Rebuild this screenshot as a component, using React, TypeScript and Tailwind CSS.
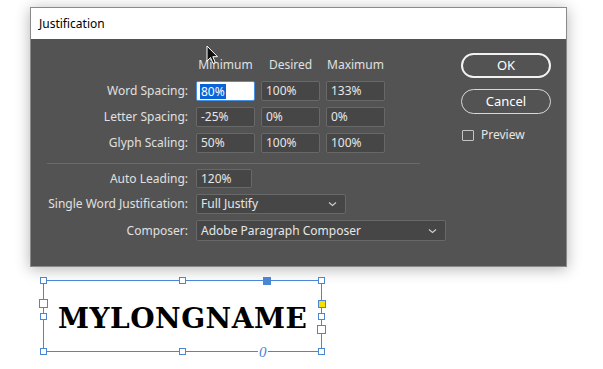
import React from "react";

const font = { fontFamily: '"Noto Sans", "Open Sans", sans-serif' };

const Field = ({ value, w = "w-[59px]", h = "h-[20px]", focused = false }: { value: string; w?: string; h?: string; focused?: boolean }) =>
  focused ? (
    <div className={`${w} ${h} rounded-[2px] border border-[#4a90e2] bg-white flex items-center pl-[3px]`}>
      <span className="bg-[#0a64d6] text-white leading-[15px] px-[1px]">{value}</span>
    </div>
  ) : (
    <div className={`${w} ${h} rounded-[2px] border border-[#686868] bg-[#464646] flex items-center pl-[4px] text-[#e6e6e6]`}>
      {value}
    </div>
  );

const Select = ({ value, w, h }: { value: string; w: string; h: string }) => (
  <div className={`${w} ${h} rounded-[2px] border border-[#686868] bg-[#464646] flex items-center justify-between pl-[4px] pr-[8px] text-[#e6e6e6]`}>
    <span>{value}</span>
    <svg width="9" height="6" viewBox="0 0 9 6">
      <path d="M1 1.5 L4.5 4.5 L8 1.5" fill="none" stroke="#d0d0d0" strokeWidth="1.1" />
    </svg>
  </div>
);

const Row = ({ label, children }: { label: string; children: React.ReactNode }) => (
  <div className="flex items-center">
    <div className="w-[157px] text-right text-[#e0e0e0]">{label}</div>
    <div className="ml-[8px] flex gap-[6px]">{children}</div>
  </div>
);

const Handle = ({ className }: { className: string }) => (
  <div className={`absolute bg-white border border-[#4a86d4] ${className}`} />
);

export default function App() {
  return (
    <div className="w-[603px] h-[369px] bg-white overflow-hidden relative text-[12px]" style={font}>
      {/* dialog */}
      <div className="ml-[30px] mt-[7px] w-[537px] h-[260px] border border-[#8a8a8a] flex flex-col shadow-[0_2px_14px_rgba(0,0,0,0.3)]">
        <div className="h-[31px] bg-white flex items-center pl-[8px] text-black">Justification</div>
        <div className="flex-1 bg-[#535353] flex">
          <div className="w-[420px] flex flex-col">
            <div className="mt-[19px] h-[14px] leading-[14px] flex ml-[165px] gap-[6px] text-[#e0e0e0]">
              <div className="w-[59px] text-center">Minimum</div>
              <div className="w-[59px] text-center">Desired</div>
              <div className="w-[59px] text-center">Maximum</div>
            </div>
            <div className="mt-[9px] flex flex-col gap-[6px]">
              <Row label="Word Spacing:">
                <Field value="80%" focused />
                <Field value="100%" />
                <Field value="133%" />
              </Row>
              <Row label="Letter Spacing:">
                <Field value="-25%" />
                <Field value="0%" />
                <Field value="0%" />
              </Row>
              <Row label="Glyph Scaling:">
                <Field value="50%" />
                <Field value="100%" />
                <Field value="100%" />
              </Row>
            </div>
            <div className="mt-[10px] ml-[16px] w-[373px] h-px bg-[#6a6a6a]" />
            <div className="mt-[5px] flex flex-col gap-[6px]">
              <Row label="Auto Leading:">
                <Field value="120%" w="w-[56px]" h="h-[19px]" />
              </Row>
              <Row label="Single Word Justification:">
                <Select value="Full Justify" w="w-[150px]" h="h-[20px]" />
              </Row>
              <Row label="Composer:">
                <Select value="Adobe Paragraph Composer" w="w-[250px]" h="h-[21px]" />
              </Row>
            </div>
          </div>
          <div className="ml-[10px] mt-[14px] flex flex-col text-[13px] text-white">
            <div className="w-[90px] h-[25px] rounded-full border-2 border-[#f2f2f2] flex items-center justify-center">OK</div>
            <div className="mt-[11px] w-[90px] h-[25px] rounded-full border border-[#d8d8d8] flex items-center justify-center">Cancel</div>
            <div className="mt-[12px] ml-[1px] flex items-center gap-[7px] text-[#e6e6e6] text-[12px]">
              <div className="w-[12px] h-[11px] border border-[#c4c4c4] rounded-[1px]" />
              <span>Preview</span>
            </div>
          </div>
        </div>
      </div>

      {/* cursor */}
      <svg className="absolute left-[206px] top-[45px]" width="13" height="20" viewBox="0 0 13 20">
        <path d="M1 1 L1 16 L4.5 12.5 L7 18.5 L9.3 17.5 L6.8 11.7 L11.5 11.7 Z" fill="#111" stroke="#fff" strokeWidth="1" />
      </svg>

      {/* text frame */}
      <div className="relative ml-[43px] mt-[13px] w-[279px] h-[72px] border border-[#4a86d4]">
        <div className="pt-[23px] pl-[14px] text-[28px] leading-[30px] font-bold text-black tracking-[0.5px]" style={{ fontFamily: '"DejaVu Serif", serif' }}>
          MYLONGNAME
        </div>
        <Handle className="w-[7px] h-[7px] -left-[4px] -top-[4px]" />
        <Handle className="w-[7px] h-[7px] left-[135px] -top-[4px]" />
        <Handle className="w-[7px] h-[7px] -right-[4px] -top-[4px]" />
        <div className="absolute w-[8px] h-[8px] bg-[#4a86d4] left-[219px] -top-[4px]" />
        <Handle className="w-[9px] h-[9px] -left-[5px] top-[18px]" />
        <Handle className="w-[7px] h-[7px] -left-[4px] top-[32px]" />
        <div className="absolute w-[8px] h-[8px] bg-[#f5e000] border border-[#4a86d4] -right-[5px] top-[19px]" />
        <Handle className="w-[7px] h-[7px] -right-[4px] top-[32px]" />
        <Handle className="w-[9px] h-[9px] -right-[5px] top-[44px]" />
        <Handle className="w-[7px] h-[7px] -left-[4px] -bottom-[4px]" />
        <Handle className="w-[7px] h-[7px] left-[135px] -bottom-[4px]" />
        <Handle className="w-[7px] h-[7px] -right-[4px] -bottom-[4px]" />
        <div className="absolute left-[214px] -bottom-[9px] bg-white px-[1px] text-[15px] italic leading-[16px] text-[#4a86d4]" style={{ fontFamily: '"Liberation Serif", serif' }}>0</div>
      </div>
    </div>
  );
}
